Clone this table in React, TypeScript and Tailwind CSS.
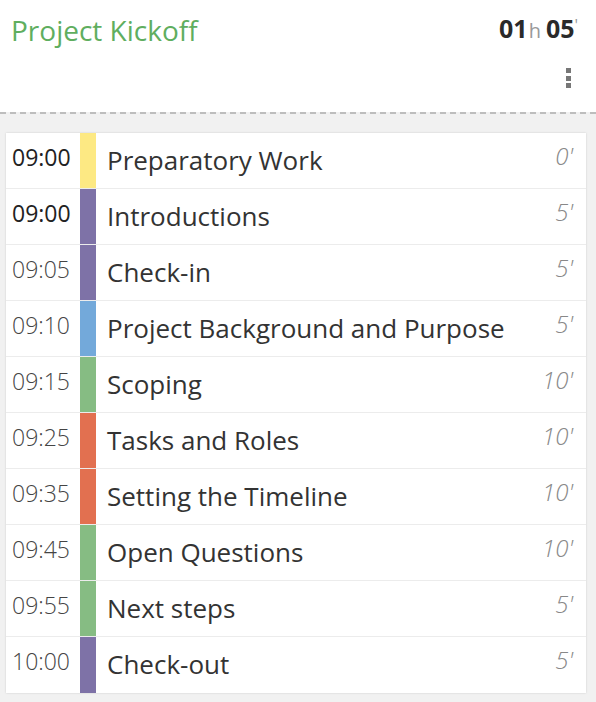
import React from "react";

type Item = { time: string; title: string; mins: number; color: string; past?: boolean };

const items: Item[] = [
  { time: "09:00", title: "Preparatory Work", mins: 0, color: "bg-[#fde983]", past: true },
  { time: "09:00", title: "Introductions", mins: 5, color: "bg-[#7e72a7]", past: true },
  { time: "09:05", title: "Check-in", mins: 5, color: "bg-[#7e72a7]" },
  { time: "09:10", title: "Project Background and Purpose", mins: 5, color: "bg-[#73a9da]" },
  { time: "09:15", title: "Scoping", mins: 10, color: "bg-[#86bc83]" },
  { time: "09:25", title: "Tasks and Roles", mins: 10, color: "bg-[#e27050]" },
  { time: "09:35", title: "Setting the Timeline", mins: 10, color: "bg-[#e27050]" },
  { time: "09:45", title: "Open Questions", mins: 10, color: "bg-[#86bc83]" },
  { time: "09:55", title: "Next steps", mins: 5, color: "bg-[#86bc83]" },
  { time: "10:00", title: "Check-out", mins: 5, color: "bg-[#7e72a7]" },
];

export default function App() {
  return (
    <div className="w-[596px] h-[702px] bg-[#f1f1f1] font-['Open_Sans',sans-serif] overflow-hidden">
      {/* header */}
      <div className="h-[112px] bg-white flex justify-between pl-[11px] pr-[11px]">
        <h1 className="text-[28px] leading-none text-[#5fae5f] mt-[16px]">Project Kickoff</h1>
        <div className="flex flex-col items-end">
          <div className="mt-[16px] mr-[7px] text-[#2a2a2a] leading-none flex items-baseline">
            <span className="text-[25px] font-bold">01</span>
            <span className="text-[20px] text-[#999] ml-[1px] mr-[5px]">h</span>
            <span className="text-[25px] font-bold">05</span>
            <span className="text-[16px] text-[#999] self-start mt-[1px]">'</span>
          </div>
          <div className="mt-[27px] mr-[14px] flex flex-col gap-[2.5px]">
            <span className="w-[5px] h-[5px] bg-[#777]" />
            <span className="w-[5px] h-[5px] bg-[#777]" />
            <span className="w-[5px] h-[5px] bg-[#777]" />
          </div>
        </div>
      </div>
      <div className="h-[2px] bg-[repeating-linear-gradient(to_right,#bdbdbd_0px,#bdbdbd_6px,transparent_6px,transparent_10px)]" />

      {/* agenda */}
      <div className="mx-[6px] mt-[19px] w-[580px] bg-white shadow-[0_0_2px_rgba(0,0,0,0.15)]">
        {items.map((it, i) => (
          <div key={i} className="h-[56px] flex border-b border-[#ececec] last:border-b-0">
            <div
              className={`w-[74px] pl-[6px] pt-[9px] text-[23px] leading-[30px] ${
                it.past ? "text-[#222]" : "text-[#444] font-light"
              }`}
            >
              {it.time}
            </div>
            <div className={`w-[16px] ${it.color}`} />
            <div className="flex-1 pl-[11px] pt-[10px] text-[26px] leading-[34px] text-[#333]">{it.title}</div>
            <div className="pr-[13px] pt-[8px] text-[24px] leading-[30px] italic font-light text-[#888]">
              {it.mins}'
            </div>
          </div>
        ))}
      </div>
    </div>
  );
}
